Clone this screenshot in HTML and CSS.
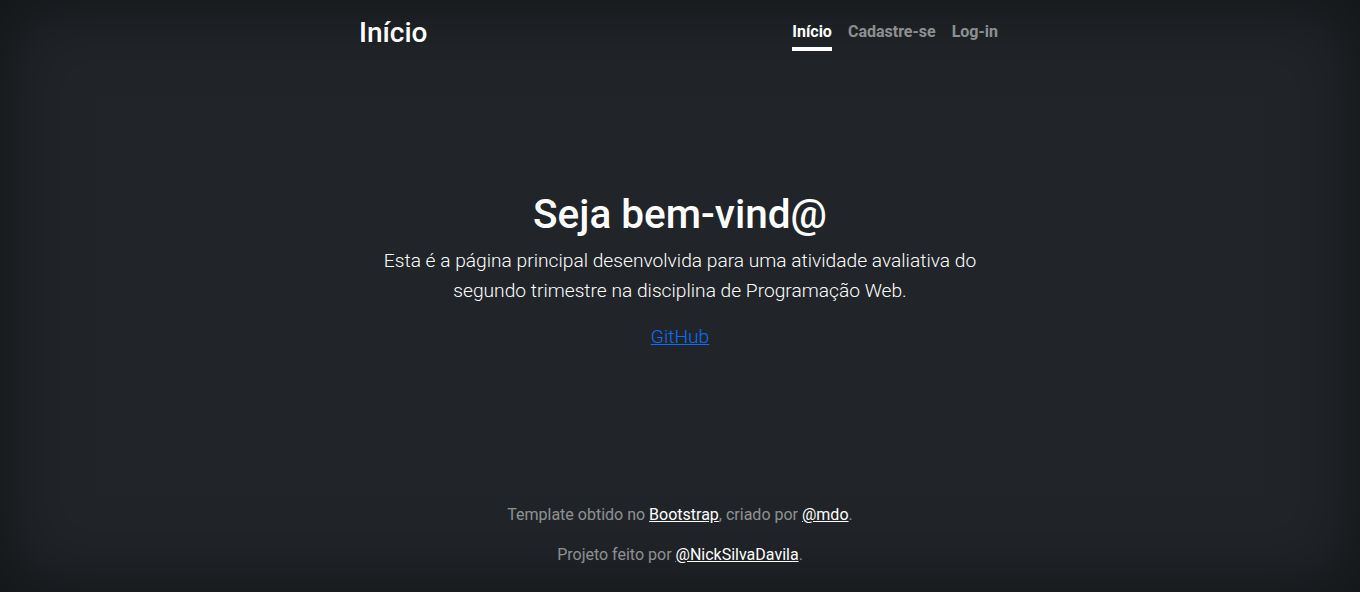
FILE: index.html
```html
<!DOCTYPE html>
<html lang="pt-BR">
<head>
<meta charset="utf-8">
<title>Início</title>
<link rel="stylesheet" href="styles.css">
</head>
<body class="page">
  <div class="cover">
    <header class="masthead">
      <h3 class="brand">Início</h3>
      <nav class="nav">
        <a class="nav-link active" href="#">Início</a>
        <a class="nav-link" href="#">Cadastre-se</a>
        <a class="nav-link" href="#">Log-in</a>
      </nav>
    </header>

    <main class="hero">
      <h1 class="title">Seja bem-vind@</h1>
      <p class="lead">Esta é a página principal desenvolvida para uma atividade avaliativa do segundo trimestre na disciplina de Programação Web.</p>
      <p class="lead"><a class="gh" href="#">GitHub</a></p>
    </main>

    <footer class="foot">
      <p>Template obtido no <a href="#">Bootstrap</a>, criado por <a href="#">@mdo</a>.</p>
      <p>Projeto feito por <a href="#">@NickSilvaDavila</a>.</p>
    </footer>
  </div>
</body>
</html>
```
FILE: styles.css
```css
html, body {
  height: 100%;
}
.page {
  margin: 0;
  background: #212529;
  color: #fff;
  font-family: Roboto, "Liberation Sans", sans-serif;
  font-size: 16px;
  line-height: 1.5;
  text-align: center;
  box-shadow: inset 0 0 5rem rgba(0, 0, 0, .5);
  display: flex;
}
.cover {
  box-sizing: border-box;
  width: 100%;
  max-width: 672px;
  height: 100%;
  margin: 0 auto;
  padding: 16px 16px 9px;
  display: flex;
  flex-direction: column;
}
.masthead {
  display: flex;
  justify-content: space-between;
  align-items: flex-start;
}
.brand {
  margin: 0 0 0 -1px;
  font-size: 28px;
  font-weight: 500;
  line-height: 1.2;
}
.nav {
  display: flex;
  gap: 16px;
  padding-right: 2px;
}
.nav-link {
  padding: 4px 0 3px;
  font-weight: 700;
  color: rgba(255, 255, 255, .5);
  text-decoration: none;
  border-bottom: 4px solid transparent;
}
.nav-link.active {
  color: #fff;
  border-bottom-color: #fff;
}
.hero {
  margin: auto 0;
  padding: 4px 16px 0;
}
.title {
  margin: 0 0 8px;
  font-size: 40.5px;
  font-weight: 500;
  line-height: 48px;
}
.lead {
  margin: 0 0 16px;
  font-size: 19.2px;
  font-weight: 300;
  line-height: 30px;
}
.gh {
  color: #0d6efd;
}
.foot {
  color: rgba(255, 255, 255, .5);
}
.foot p {
  margin: 0 0 16px;
}
.foot a {
  color: #fff;
}
```
